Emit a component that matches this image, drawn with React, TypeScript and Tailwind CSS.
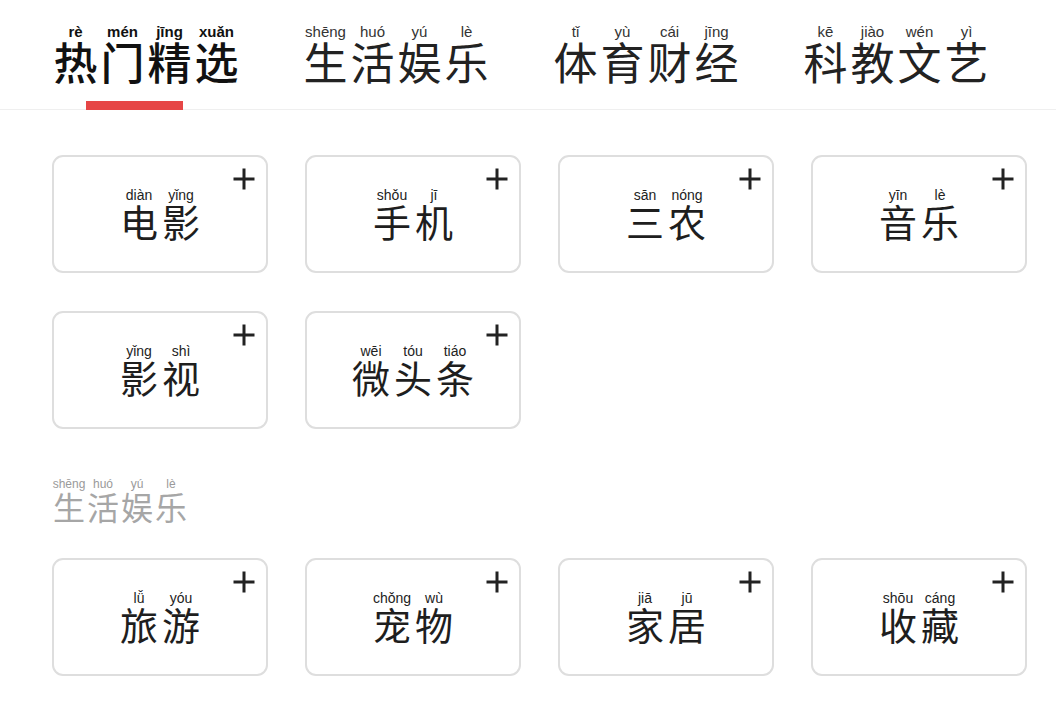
import React from "react";

type Syl = [string, string];

const CJK = { fontFamily: '"Noto Sans CJK SC", "Noto Sans", sans-serif' };
const LAT = { fontFamily: '"Liberation Sans", Arial, sans-serif' };

const tabs: { syl: Syl[]; active?: boolean }[] = [
  { syl: [["热", "rè"], ["门", "mén"], ["精", "jīng"], ["选", "xuǎn"]], active: true },
  { syl: [["生", "shēng"], ["活", "huó"], ["娱", "yú"], ["乐", "lè"]] },
  { syl: [["体", "tǐ"], ["育", "yù"], ["财", "cái"], ["经", "jīng"]] },
  { syl: [["科", "kē"], ["教", "jiào"], ["文", "wén"], ["艺", "yì"]] },
];

const group1: Syl[][] = [
  [["电", "diàn"], ["影", "yǐng"]],
  [["手", "shǒu"], ["机", "jī"]],
  [["三", "sān"], ["农", "nóng"]],
  [["音", "yīn"], ["乐", "lè"]],
  [["影", "yǐng"], ["视", "shì"]],
  [["微", "wēi"], ["头", "tóu"], ["条", "tiáo"]],
];

const group2: Syl[][] = [
  [["旅", "lǚ"], ["游", "yóu"]],
  [["宠", "chǒng"], ["物", "wù"]],
  [["家", "jiā"], ["居", "jū"]],
  [["收", "shōu"], ["藏", "cáng"]],
];

function Plus() {
  return (
    <svg className="absolute top-[10px] right-[10px]" width="24" height="24" viewBox="0 0 24 24">
      <path d="M12 1.5V22.5M1.5 12H22.5" stroke="#222" strokeWidth="3" fill="none" />
    </svg>
  );
}

function Card({ syl }: { syl: Syl[] }) {
  return (
    <div className="relative h-[118px] w-[216px] rounded-[11px] border-2 border-[#dedede] bg-white flex items-center justify-center">
      <Plus />
      <div className="flex">
        {syl.map(([c, p], i) => (
          <div key={i} className="flex w-[42px] flex-col items-center">
            <span style={LAT} className="h-[13px] whitespace-nowrap text-[14px] leading-[13px] text-[#222]">
              {p}
            </span>
            <span style={CJK} className="text-[38px] leading-[38px] text-[#1e1e1e]">
              {c}
            </span>
          </div>
        ))}
      </div>
    </div>
  );
}

export default function App() {
  return (
    <div className="h-[704px] w-[1056px] overflow-hidden bg-white">
      <div className="flex h-[110px] border-b border-[#efefef] pl-[21px] pt-[24px]">
        {tabs.map((t, ti) => (
          <div key={ti} className="relative flex w-[250px] justify-center">
            <div className="flex h-fit">
              {t.syl.map(([c, p], i) => (
                <div key={i} className="flex w-[47px] flex-col items-center">
                  <span
                    style={LAT}
                    className={`h-[15px] whitespace-nowrap text-[15px] leading-[15px] ${
                      t.active ? "font-bold text-[#111]" : "text-[#333]"
                    }`}
                  >
                    {p}
                  </span>
                  <span
                    style={CJK}
                    className={`text-[44px] leading-[44px] ${
                      t.active ? "font-medium text-[#111]" : "text-[#222]"
                    }`}
                  >
                    {c}
                  </span>
                </div>
              ))}
            </div>
            {t.active && (
              <div className="absolute bottom-[-1px] left-[65px] h-[9px] w-[97px] bg-[#e64646]" />
            )}
          </div>
        ))}
      </div>

      <div className="px-[52px] pt-[45px]">
        <div className="grid grid-cols-[repeat(4,216px)] gap-x-[37px] gap-y-[38px]">
          {group1.map((s, i) => (
            <Card key={i} syl={s} />
          ))}
        </div>

        <div className="mt-[50px] flex">
          {(
            [
              ["生", "shēng"],
              ["活", "huó"],
              ["娱", "yú"],
              ["乐", "lè"],
            ] as Syl[]
          ).map(([c, p], i) => (
            <div key={i} className="flex w-[34px] flex-col items-center">
              <span style={LAT} className="h-[11px] whitespace-nowrap text-[12px] leading-[11px] text-[#9a9a9a]">
                {p}
              </span>
              <span style={CJK} className="text-[32px] leading-[32px] text-[#a6a6a6]">
                {c}
              </span>
            </div>
          ))}
        </div>

        <div className="mt-[36px] grid grid-cols-[repeat(4,216px)] gap-x-[37px] gap-y-[38px]">
          {group2.map((s, i) => (
            <Card key={i} syl={s} />
          ))}
        </div>
      </div>
    </div>
  );
}
